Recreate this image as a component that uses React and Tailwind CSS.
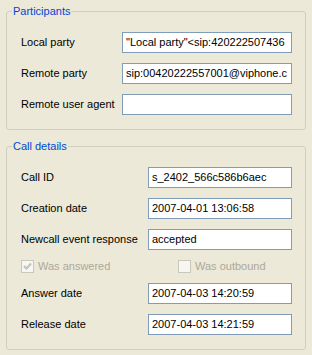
import React from 'react';

const PARTICIPANTS = [
  { label: 'Local party', value: '"Local party"<sip:420222507436' },
  { label: 'Remote party', value: 'sip:00420222557001@viphone.c' },
  { label: 'Remote user agent', value: '' },
];

function Field({ label, value, fieldWidth, first }) {
  return (
    <div className={`flex items-center h-[21px] ${first ? '' : 'mt-[10px]'}`}>
      <span className="flex-1 pl-[14px] text-black">{label}</span>
      <div
        className="h-[21px] border border-[#7F9DB9] bg-white pl-[3px] overflow-hidden whitespace-nowrap leading-[19px] text-black"
        style={{ width: fieldWidth }}
      >
        {value}
      </div>
    </div>
  );
}

function CheckBox({ checked, label }) {
  return (
    <div className="flex items-center gap-[4px]">
      <span className="w-[13px] h-[13px] border border-[#CAC8BB] bg-[#F6F6F2] flex items-center justify-center">
        {checked && (
          <svg width="9" height="9" viewBox="0 0 9 9">
            <path d="M1 4 L3.5 6.5 L8 1.5" fill="none" stroke="#C4C2B6" strokeWidth="2" />
          </svg>
        )}
      </span>
      <span className="text-[#ACA899]">{label}</span>
    </div>
  );
}

function Group({ title, children }) {
  return (
    <fieldset className="border border-[#D0D0BF] rounded-[3px] pb-[14px] pr-[13px]">
      <legend className="ml-[5px] px-[1px] text-[#0046D5] leading-[13px]">{title}</legend>
      <div className="pt-[14px]">{children}</div>
    </fieldset>
  );
}

export default function App() {
  return (
    <div
      className="w-[312px] h-[355px] bg-[#ECE9D8] px-[6px] pt-[5px] text-[11px] flex flex-col gap-[10px]"
      style={{ fontFamily: '"Liberation Sans", Arial, sans-serif' }}
    >
      <Group title="Participants">
        {PARTICIPANTS.map((p, i) => (
          <Field key={p.label} label={p.label} value={p.value} fieldWidth={170} first={i === 0} />
        ))}
      </Group>
      <Group title="Call details">
        <Field label="Call ID" value="s_2402_566c586b6aec" fieldWidth={144} first />
        <Field label="Creation date" value="2007-04-01 13:06:58" fieldWidth={144} />
        <Field label="Newcall event response" value="accepted" fieldWidth={144} />
        <div className="flex items-center h-[33px] pl-[14px]">
          <div className="w-[157px]">
            <CheckBox checked label="Was answered" />
          </div>
          <CheckBox label="Was outbound" />
        </div>
        <Field label="Answer date" value="2007-04-03 14:20:59" fieldWidth={144} first />
        <Field label="Release date" value="2007-04-03 14:21:59" fieldWidth={144} />
      </Group>
    </div>
  );
}
